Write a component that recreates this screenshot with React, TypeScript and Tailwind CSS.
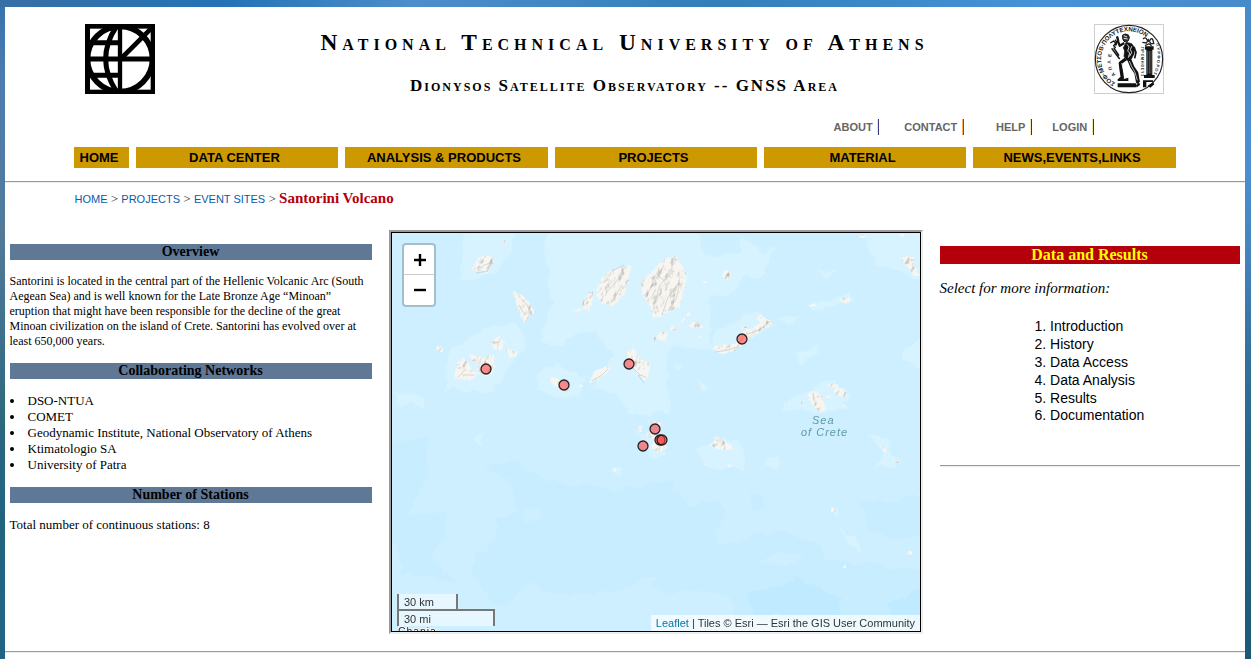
import React from "react";

const serif = "font-['Liberation_Serif',serif]";
const sans = "font-['Liberation_Sans',sans-serif]";

function Rule() {
  return <div className="h-[2px] w-full border-t border-b border-t-[#9a9a9a] border-b-[#ededed]" />;
}

function GlobeLogo() {
  return (
    <svg className="block h-[70px] w-[70px]" viewBox="30 27 210 210">
      <rect x="30" y="27" width="210" height="210" fill="#000" />
      <rect x="45" y="41" width="182" height="183" fill="#fff" />
      <g fill="none" stroke="#000" strokeWidth="15">
        <circle cx="135" cy="132" r="97.5" strokeWidth="17" />
        <path d="M135 32V232" strokeWidth="13" />
        <path d="M36 132H236" />
        <path d="M45 83H135M45 181H135" />
        <path d="M124 35Q60 132 124 229" />
        <path d="M137 132L231 38" strokeWidth="14" />
      </g>
    </svg>
  );
}

function SealLogo() {
  return (
    <svg className="block h-[70px] w-[70px]" viewBox="27 27 210 210">
      <rect x="28.5" y="28.5" width="207" height="207" fill="#fff" stroke="#cfcfcf" strokeWidth="3" />
      <circle cx="132" cy="132" r="101" fill="none" stroke="#222" strokeWidth="3.5" />
      <defs>
        <path id="seal-arc" d="M90.5 204A83 83 0 1 1 190 73" />
        <path id="seal-left" d="M92 180Q68 148 82 112" />
        <path id="seal-right" d="M212 86Q226 132 204 182" />
      </defs>
      <g fontFamily="Liberation Sans, sans-serif" fontWeight="700" fill="#222">
        <text fontSize="18.5">
          <textPath href="#seal-arc" textLength="274">
            ΣΟΦ·ΜΕΤΣΟΒ·ΠΟΛΥΤΕΧΝΕΙΟΝ
          </textPath>
        </text>
        <text fontSize="14">
          <textPath href="#seal-left" textLength="66">
            ΑΠΛΕ
          </textPath>
        </text>
        <text fontSize="12">
          <textPath href="#seal-right" textLength="94">
            ΠΥΡΦΟΡΟΣ
          </textPath>
        </text>
        <text fontSize="11" transform="translate(167 96) rotate(90)" textLength="88">
          ΠΡΟΜΗΘΕΥΣ
        </text>
      </g>
      <g fill="none" stroke="#111" strokeLinejoin="round">
        <path d="M113 60l8-3 9 3 3 7-3 10-6 4-7-2-4-8z" fill="#333" strokeWidth="3" />
        <path d="M116 62l10 4M116 70l12 2" stroke="#fff" strokeWidth="2.5" />
        <path d="M124 82l16 4 9 12-2 18-8 16-14 4-8-12 2-16-4-10z" fill="#111" strokeWidth="2" />
        <path d="M126 88l6 8-4 12 6 6-4 14M140 94l-4 10 4 8-6 12" stroke="#fff" strokeWidth="2.5" />
        <path d="M118 84L104 92 98 76M96 64l4 14" strokeWidth="7" />
        <path d="M147 96l6 16-4 18" strokeWidth="5" />
        <path d="M80 100L104 132M86 98l16 24" strokeWidth="4.5" />
        <path d="M76 84l10-6 6 6-6 8 6 6M90 74l6 8-4 10" strokeWidth="4" />
        <path d="M122 132l-16 12 2 18 4 26-8 6" strokeWidth="10" />
        <path d="M132 132l10 24 12 18 5 28" strokeWidth="12" />
        <path d="M133 138l7 16 10 18 7 24M110 144l4 16" stroke="#fff" strokeWidth="2" />
        <path d="M156 200l6 8-8 6" strokeWidth="6" />
      </g>
      <g fill="#111">
        <path d="M98 192l12-4 6 4 14-4v10H98zM98 205h56v12H98z" />
        <path d="M180 94h26v10h-4v76h7v9h-32v-9h7v-76h-4z" />
        <path d="M188 108v68M193 108v68M198 108v68" stroke="#999" strokeWidth="1.6" />
        <path d="M174 196h30v5h-20v16h-10zM188 212l16-10 4 6-12 10z" />
      </g>
      <path
        d="M174 72q8-8 12 2t10 0 10 10M172 82l12 2 6-10 8 12 10 0M180 92l12-6 8 6"
        fill="none"
        stroke="#222"
        strokeWidth="4"
      />
    </svg>
  );
}

const stations = [
  [94, 136],
  [172, 152],
  [237, 131],
  [350, 106],
  [263, 196],
  [251, 213],
  [268, 207],
  [270, 207],
];

/* Each group below holds one quadrant of the map, digitised at three times its drawn size. */
const NW = "translate(-7 -8) scale(0.33333)";
const NE = "translate(263 -8) scale(0.33333)";
const SW = "translate(-7 197) scale(0.33333)";
const SE = "translate(263 197) scale(0.33333)";

function SeaMap() {
  return (
    <svg className="block h-[398px] w-[528px]" viewBox="0 0 528 398">
      <defs>
        <filter id="coast" x="0" y="0" width="528" height="398" filterUnits="userSpaceOnUse" colorInterpolationFilters="sRGB">
          <feTurbulence type="fractalNoise" baseFrequency="0.25" numOctaves="2" seed="8" result="edge" />
          <feDisplacementMap in="SourceGraphic" in2="edge" scale="4" xChannelSelector="R" yChannelSelector="G" result="land" />
          <feTurbulence type="fractalNoise" baseFrequency="0.16 0.1" numOctaves="3" seed="21" result="relief" />
          <feColorMatrix in="relief" type="matrix" values="0 0 0 0 0  0 0 0 0 0  0 0 0 0 0  1 0 0 0 0" result="height" />
          <feDiffuseLighting in="height" surfaceScale="1.1" diffuseConstant="1.25" lightingColor="#fdfcfa" result="shade">
            <feDistantLight azimuth="225" elevation="55" />
          </feDiffuseLighting>
          <feComposite in="shade" in2="land" operator="in" result="shaded" />
          <feBlend in="shaded" in2="land" mode="multiply" />
        </filter>
        <filter id="shelf" x="0" y="0" width="528" height="398" filterUnits="userSpaceOnUse" colorInterpolationFilters="sRGB">
          <feTurbulence type="fractalNoise" baseFrequency="0.07" numOctaves="3" seed="3" result="edge" />
          <feDisplacementMap in="SourceGraphic" in2="edge" scale="12" xChannelSelector="R" yChannelSelector="G" />
          <feGaussianBlur stdDeviation="0.5" />
        </filter>
      </defs>
      <rect width="528" height="398" fill="#ceefff" />
      <g filter="url(#shelf)">
        <g transform={SW} fill="#c8edff">
          <path d="M300 110L400 90 480 150 700 180 860 160V420L700 480 550 500 430 460 340 540 260 440 270 370 330 340 340 260 400 250 385 160z" />
          <path d="M-10 30L120 20 130 130 60 260 180 250 180 330 130 380 220 460 60 430 30 340-10 320z" />
        </g>
        <g transform={SE} fill="#c8edff">
          <path d="M0 180L70 180 100 230 190 200 210 260 170 310 200 340 370 300 490 340 520 390 640 400 830 430V610H500L260 560 210 490 0 480z" />
          <path d="M610 210L700 220 830 190V320L700 330 640 290z" />
          <path d="M280 190L320 200 330 240 300 245z" />
        </g>
        <path transform={SE} fill="#c0eaff" d="M270 490L360 470 420 450 490 470 550 500 550 560H300zM700 520L820 460V590H690z" />
        <g fill="#d6f3ff">
          <path transform={NW} d="M235 0H400L380 80 330 140 280 160 230 175z" />
          <path transform={NW} d="M500 0H850V560L740 570 690 500 610 490 680 400 640 320 550 330 530 370 465 350 500 240 480 80z" />
          <path transform={NW} d="M190 380L300 310 400 300 430 370 370 430 320 500 180 495zM460 440L520 420 600 460 580 520 460 500zM20 500L120 520 120 545 40 535z" />
          <path transform={NE} d="M-10 0H120L150 90 250 80 260 40 330 80 370 60 320 160 270 150 240 200 170 220 160 310 180 380 30 360-10 430z" />
          <path transform={NE} d="M600 0H820V170L760 150 660 120 640 50zM740 380L820 320V440L740 400zM180 310L290 260 350 280 340 310 260 350 180 390zM360 280L430 270 410 310zM420 390L500 350 470 400 425 420zM490 130L545 140 510 160z" />
          <path transform={NE} d="M380 530L460 500 520 460 580 500 570 560 380 555zM50 420L90 410 70 440zM120 470L165 490 145 515zM460 240L590 205 600 235 470 250z" />
          <path transform={SE} d="M130 60L180 20 250 30 270 120 150 110zM310 110L370 80 370 120zM640 10L690 20 730 100 660 120 690 70zM550 290L600 330 630 370 580 345zM520 230L545 225 545 260z" />
          <path transform={SW} d="M675 110L705 105 710 150zM750 0L840 20V70L790 80zM275 20L300 10 290 60z" />
        </g>
        <g fill="#ceefff">
          <path transform={SE} d="M300 400L380 360 450 380 430 400z" />
          <path transform={SW} d="M410 240L470 240 470 275 420 275z" />
        </g>
      </g>
      <g filter="url(#coast)" fill="#f6f5f2">
        <g transform={NW}>
          <path d="M262 138L280 98 308 90 325 98 318 125 306 148 290 134z" />
          <path d="M384 200L410 210 432 230 450 264 432 270 420 294 404 268 394 232z" />
          <path d="M638 188L660 148 700 128 738 124 724 190 706 224 680 242 650 232 636 210z" />
          <path d="M590 230L628 190 620 240 612 264 596 250zM568 254L594 248 580 260zM556 260l6-4 2 8z" />
          <path d="M154 366L172 368 168 384 160 378zM320 350L342 334 358 350 346 376 326 372zM364 372L392 378 394 394 374 398z" />
          <path d="M208 462L216 412 240 402 262 436 276 446 260 464 230 460zM256 388L276 392 290 402 322 386 330 430 312 452 276 446 284 418 262 406z" />
          <path d="M494 462L510 458 530 470 554 500 540 500 500 474zM612 474L630 436 676 424 670 440 640 464zM582 480h12v6h-12z" />
          <path d="M722 384L746 370 760 400 796 416 790 440 784 468 760 448 748 430 730 414z" />
          <path d="M808 344L824 322 844 320V346zM356 48h10v7h-10zM784 586L812 590 836 600 820 606zM762 604L770 600 772 618 760 618z" />
        </g>
        <g transform={NE}>
          <path d="M-44 174L-20 150 0 130 30 105 60 90 76 116 96 150 84 200 74 245 46 258 20 274-4 278-14 240-34 220z" />
          <path d="M-4 344L20 320 34 330 26 346zM44 318L52 300 64 314zM100 302L124 290 146 304 120 310zM72 292L90 280 86 288zM94 264l12-2 0 8-10 4zM132 334h14v5h-14z" />
          <path d="M200 150L218 136 230 154 216 166zM548 222L584 220 582 232 560 228zM462 242L480 234 480 246zM612 30L630 36 620 42zM730 26L748 30 740 36zM147 168h8v6h-8z" />
          <path d="M738 106L756 90 782 102 774 116 796 156 776 150 758 124z" />
          <path d="M174 366L208 360 240 358 262 320 296 310 320 294 300 280 316 272 352 292 300 328 268 358 240 376 200 388z" />
          <path d="M260 304h16v6h-16zM342 292L360 298 352 302zM516 474L536 474 572 506 570 518 546 508zM458 504L488 500 504 526 512 554 492 560 470 536zM566 540L580 546 572 552zM514 512h14v6h-14zM388 532h6v6h-6zM438 528h5v5h-5zM140 482h9v6h-9z" />
        </g>
        <g transform={SE}>
          <path d="M166 42L190 22 216 40 238 54 210 60 180 54zM-6 36L20 36 36 52 4 66-10 48zM218 104h11v8h-11zM676 50L690 50 692 70zM718 90h12v10h-12zM526 234h15v12h-15zM756 366h14v9h-14zM564 406h8v8h-8z" />
        </g>
        <g transform={SW}>
          <path d="M786 10L804 10 812 24 790 24zM806 52L840 42 830 64zM760 0h12v6h-12zM686 114h9v12h-9z" />
        </g>
      </g>
      <g fill="none" stroke="#bdb7ad" strokeOpacity="0.55" strokeWidth="0.9">
        <path d="M256 60l8-14 8-14M262 72l6-20 12-12M270 82l6-18 12-14M276 78l8-12 4-16M264 40l8 8 6-12M259 66l5-10" />
        <path d="M212 50l8-12 12-6M214 60l14-16M222 66l8-14M86 38l6-6 7-2M84 40l12-2M129 66l6 6 5 10M127 72l6 10" />
        <path d="M66 144l8-8M70 142l12 0M240 134l8 8 6 2M246 142l6 8M200 148l10-6 6-6" />
        <path d="M324 119l12-2 9-3 8-12 14-5 12-9" />
      </g>
      <g
        fontFamily="Liberation Sans, sans-serif"
        fontSize="11"
        fontStyle="italic"
        fill="#5f9aa5"
        letterSpacing="1"
      >
        <text x="420" y="191">Sea</text>
        <text x="409" y="203">of Crete</text>
      </g>
      <text
        x="6"
        y="401.5"
        fontFamily="Liberation Sans, sans-serif"
        fontSize="10.5"
        letterSpacing="0.9"
        fill="#222"
        stroke="#fff"
        strokeWidth="1.5"
        paintOrder="stroke"
      >
        Chania
      </text>
      <g fill="#ff3838" fillOpacity="0.57" stroke="#111" strokeOpacity="0.9" strokeWidth="1.3">
        {stations.map(([x, y]) => (
          <circle key={`${x}-${y}`} cx={x} cy={y} r="5" />
        ))}
      </g>
    </svg>
  );
}

function MapPanel() {
  return (
    <div className="h-[404px] w-[534px] border-2 border-t-[#9a9a9a] border-r-[#ededed] border-b-[#ededed] border-l-[#9a9a9a]">
      <div className={`relative h-[400px] w-[530px] overflow-hidden border border-black ${sans}`}>
        <SeaMap />
        <div className="absolute top-[10px] left-[10px] flex h-[64px] w-[34px] flex-col rounded-[4px] border-2 border-black/20 bg-white bg-clip-padding">
          <button className="flex h-[30px] items-center justify-center border-b border-[#ccc] pl-[1px]" aria-label="+">
            <svg width="12" height="12" viewBox="0 0 12 12">
              <path d="M6 0V12M0 6H12" stroke="#000" strokeWidth="2.4" />
            </svg>
          </button>
          <button className="flex h-[30px] items-center justify-center pl-[1px]" aria-label="−">
            <svg width="12" height="12" viewBox="0 0 12 12">
              <path d="M0 6H12" stroke="#000" strokeWidth="2.4" />
            </svg>
          </button>
        </div>
        <div className="absolute top-[361px] left-[5px] text-[11px] text-[#333]">
          <div className="h-[17px] w-[61px] border-2 border-t-0 border-[#777] bg-white/50 pl-[5px] leading-[16px]">30 km</div>
          <div className="-mt-[2px] h-[17px] w-[98px] border-2 border-b-0 border-[#777] bg-white/50 pl-[5px] leading-[17px]">30 mi</div>
        </div>
        <div className="absolute right-0 bottom-0 h-[16px] bg-white/70 px-[5px] text-[11px] leading-[16px] whitespace-nowrap text-[#333]">
          <span className="text-[#0078a8]">Leaflet</span> | Tiles © Esri — Esri the GIS User Community
        </div>
      </div>
    </div>
  );
}

function TopLink({ label, pad, bar }: { label: string; pad: string; bar: string }) {
  return (
    <div className={`flex h-[16px] items-center ${pad}`}>
      <span className="mr-[4.4px] leading-[16px]">{label}</span>
      <span className={`h-[16px] w-[2px] border-r border-l ${bar}`} />
    </div>
  );
}

function NavItem({ label, size }: { label: string; size: string }) {
  return (
    <div className={`flex h-[21px] items-center justify-center bg-[#cc9900] pr-[5px] ${size}`}>{label}</div>
  );
}

function Heading({ children }: { children: React.ReactNode }) {
  return (
    <h3 className="h-[16px] w-[362px] bg-[#5f7896] pr-[1px] text-center text-[14px] leading-[16px] font-bold">
      {children}
    </h3>
  );
}

const networks = [
  "DSO-NTUA",
  "COMET",
  "Geodynamic Institute, National Observatory of Athens",
  "Ktimatologio SA",
  "University of Patra",
];

const results = ["Introduction", "History", "Data Access", "Data Analysis", "Results", "Documentation"];

export default function App() {
  return (
    <div className={`flex h-[659px] w-[1251px] flex-col overflow-hidden text-black ${serif}`}>
      <div className="h-[7px] shrink-0 bg-[linear-gradient(90deg,#376fa5_0%,#2373b5_18%,#4d8ecb_33%,#327fba_57%,#4693d8_84%,#488bca_100%)]" />
      <div className="flex h-[652px]">
        <div className="w-[5px] shrink-0 bg-[linear-gradient(180deg,#3873ad_0%,#4d7db0_12%,#527a98_35%,#2a677f_65%,#20637f_80%,#226583_100%)]" />
        <div className="flex w-[1240px] flex-col bg-white">
          <header className="flex h-[112px] shrink-0 justify-between pt-[17px] pr-[81px] pl-[80px]">
            <GlobeLogo />
            <div className="flex flex-col items-center font-bold whitespace-nowrap [font-variant:small-caps]">
              <h1 className="mt-[4px] text-[23.4px] leading-[28px] tracking-[5px]">
                National Technical University of Athens
              </h1>
              <h2 className="mt-[20px] text-[17px] leading-[20px] tracking-[2px]">Dionysos Satellite Observatory -- GNSS Area</h2>
            </div>
            <SealLogo />
          </header>
          <div className={`flex h-[28px] shrink-0 text-[11px] font-bold text-[#666] ${sans}`}>
            <TopLink label="ABOUT" pad="ml-[828.6px]" bar="border-l-[#e4e4f4] border-r-[#3c3c82]" />
            <TopLink label="CONTACT" pad="ml-[25.2px]" bar="border-l-[#f5b060] border-r-[#6a4a50]" />
            <TopLink label="HELP" pad="ml-[32.4px]" bar="border-l-[#f4e8b0] border-r-[#34345c]" />
            <TopLink label="LOGIN" pad="ml-[20.6px]" bar="border-l-[#f4e8a0] border-r-[#34345c]" />
          </div>
          <nav className={`flex h-[34px] shrink-0 items-start gap-[7px] pl-[69px] text-[13px] font-bold ${sans}`}>
            <NavItem label="HOME" size="w-[55px]" />
            <NavItem label="DATA CENTER" size="w-[202px]" />
            <NavItem label="ANALYSIS & PRODUCTS" size="w-[203px]" />
            <NavItem label="PROJECTS" size="w-[202px]" />
            <NavItem label="MATERIAL" size="w-[202px]" />
            <NavItem label="NEWS,EVENTS,LINKS" size="w-[203px]" />
          </nav>
          <Rule />
          <div className="flex h-[47px] shrink-0 items-baseline pt-[4px] pl-[69.5px] text-[13px] whitespace-pre text-[#333]">
            <a className={`text-[11px] text-[#0a5aaa] ${sans}`}>HOME</a>
            <span> &gt; </span>
            <a className={`text-[11px] text-[#0a5aaa] ${sans}`}>PROJECTS</a>
            <span> &gt; </span>
            <a className={`text-[11px] text-[#0a5aaa] ${sans}`}>EVENT SITES</a>
            <span> &gt; </span>
            <span className="text-[15px] font-bold text-[#b3000b]">Santorini Volcano</span>
          </div>
          <main className="flex h-[421px] shrink-0">
            <section className="w-[384px] pt-[14px] pl-[5px]">
              <Heading>Overview</Heading>
              <p className="mt-[14px] -ml-[0.5px] w-[362px] text-[12px] leading-[15px]">
                Santorini is located in the central part of the Hellenic Volcanic Arc (South Aegean Sea) and is well known for
                the Late Bronze Age “Minoan” eruption that might have been responsible for the decline of the great Minoan
                civilization on the island of Crete. Santorini has evolved over at least 650,000 years.
              </p>
              <div className="h-[14px]" />
              <Heading>Collaborating Networks</Heading>
              <ul className="mt-[14px] mb-[14px] text-[13px] leading-[16px]">
                {networks.map((name) => (
                  <li key={name} className="flex items-center">
                    <span className="mr-[13.5px] h-[4px] w-[4px] rounded-full bg-black" />
                    {name}
                  </li>
                ))}
              </ul>
              <Heading>Number of Stations</Heading>
              <p className="mt-[14px] -ml-[0.5px] text-[13px] leading-[16px]">Total number of continuous stations: 8</p>
            </section>
            <MapPanel />
            <section className="w-[317px] pt-[16px] pl-[17px]">
              <h3 className="h-[18px] w-[300px] bg-[#b3000b] pr-[1px] text-center text-[16px] leading-[18px] font-bold text-[#ff0]">
                Data and Results
              </h3>
              <p className="mt-[15px] -ml-[0.5px] text-[15px] leading-[18px] italic">Select for more information:</p>
              <ol className={`mt-[21px] h-[147px] pl-[94.5px] text-[14px] leading-[17.88px] ${sans}`}>
                {results.map((name, i) => (
                  <li key={name}>
                    {i + 1}. {name}
                  </li>
                ))}
              </ol>
              <div className="w-[300px]">
                <Rule />
              </div>
            </section>
          </main>
          <Rule />
        </div>
        <div className="w-[6px] shrink-0 bg-[linear-gradient(180deg,#488bca_0%,#4a8fd0_25%,#4483bd_38%,#35729e_52%,#27658a_70%,#1c5876_100%)]" />
      </div>
    </div>
  );
}
